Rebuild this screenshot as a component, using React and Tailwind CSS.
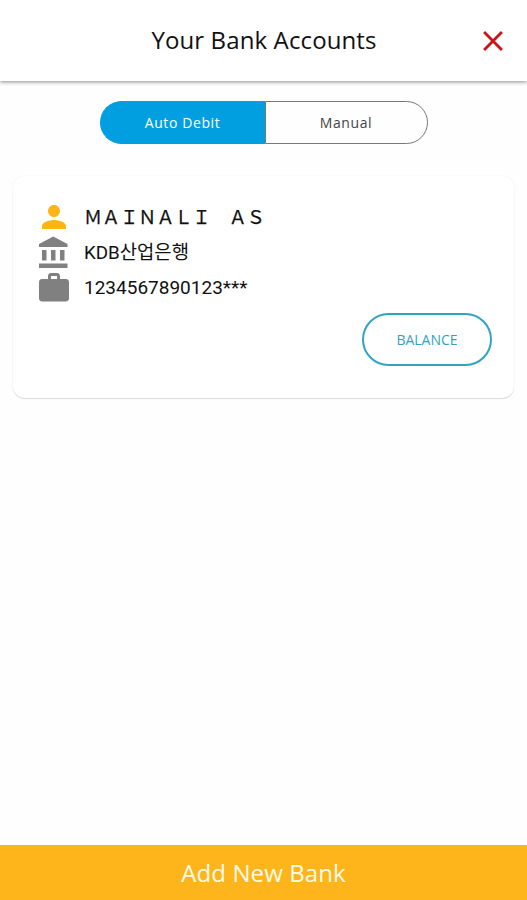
import React, { useState } from 'react';
import { MdClose, MdPerson, MdWork } from 'react-icons/md';

const BankIcon = ({ className }) => (
  <svg viewBox="0 0 24 24" fill="currentColor" className={className}>
    <path d="M4 10v7h3v-7H4zm6 0v7h3v-7h-3zM2 22h19v-3H2v3zm14-12v7h3v-7h-3zm-4.5-9L2 6v2h19V6l-9.5-5z" />
  </svg>
);

const accounts = [
  { id: 1, holder: 'ＭＡＩＮＡＬＩ　ＡＳ', bank: 'KDB산업은행', number: '1234567890123***' },
];

const AccountCard = ({ account }) => (
  <div className="mx-[13px] mt-8 h-[222px] rounded-xl bg-white pl-[23px] pr-[22px] pt-[23px] shadow-[0_1px_1px_rgba(0,0,0,0.13),0_0_2px_rgba(0,0,0,0.06)]">
    {/* Account details */}
    <div className="flex h-9 items-center gap-3">
      <MdPerson className="h-9 w-9 shrink-0 text-[#fdb515]" />
      <span className="whitespace-nowrap pb-0.5 font-['Noto_Sans_CJK_KR',sans-serif] text-[18.1px] leading-8 text-[#111] [-webkit-text-stroke:0.25px_#111]">
        {account.holder}
      </span>
    </div>
    <div className="flex h-[35px] items-center gap-3">
      <BankIcon className="h-9 w-9 shrink-0 text-[#808080]" />
      <span className="whitespace-nowrap font-[Roboto,'Noto_Sans_CJK_KR',sans-serif] text-[18.8px] leading-9 text-[#111]">
        {account.bank}
      </span>
    </div>
    <div className="flex h-[35px] items-center gap-3">
      <MdWork className="h-9 w-9 shrink-0 text-[#808080]" />
      <span className="whitespace-nowrap font-[Roboto,sans-serif] text-[19px] leading-8 text-[#111]">
        {account.number}
      </span>
    </div>

    <div className="mt-2 flex justify-end">
      <button className="h-[53px] w-[130px] rounded-full border-2 border-[#2fa3c3] text-sm text-[#2fa3c3]">
        BALANCE
      </button>
    </div>
  </div>
);

const App = () => {
  const [mode, setMode] = useState('auto');

  return (
    <div className="flex h-[900px] w-[527px] flex-col overflow-hidden bg-[#fefefe] font-['Open_Sans',sans-serif]">
      {/* Header */}
      <header className="grid h-[81px] shrink-0 grid-cols-[70px_1fr_69px] items-center bg-white shadow-[0_1px_4px_rgba(0,0,0,0.45)]">
        <h1 className="col-start-2 pb-px text-center text-2xl tracking-[0.12px] text-[#111]">Your Bank Accounts</h1>
        <button className="flex justify-center">
          <MdClose className="h-[34px] w-[34px] text-[#cc1417]" />
        </button>
      </header>

      {/* Mode switch */}
      <div className="mx-auto mt-5 flex h-[43px] w-[328px] shrink-0 text-sm tracking-[0.6px]">
        <button
          onClick={() => setMode('auto')}
          className={`w-[165px] rounded-l-full border border-r-0 ${mode === 'auto' ? 'border-[#029fe0] bg-[#029fe0] text-white' : 'border-[#777] text-[#444]'}`}
        >
          Auto Debit
        </button>
        <button
          onClick={() => setMode('manual')}
          className={`w-[163px] rounded-r-full border ${mode === 'manual' ? 'border-[#029fe0] bg-[#029fe0] text-white' : 'border-[#777] text-[#444]'}`}
        >
          Manual
        </button>
      </div>

      <main className="flex-1">
        {accounts.map((account) => (
          <AccountCard key={account.id} account={account} />
        ))}
      </main>

      <button className="h-[55px] shrink-0 bg-[#fdb51b] text-2xl tracking-[0.1px] text-[#fffbe8]">
        Add New Bank
      </button>
    </div>
  );
};

export default App;
